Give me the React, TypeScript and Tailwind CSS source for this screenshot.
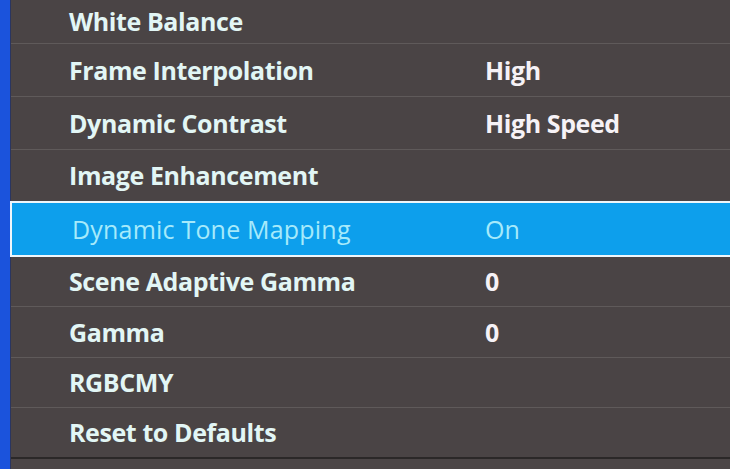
import React from "react";

type Row = { label: string; value?: string; h: string; sel?: boolean };

const rows: Row[] = [
  { label: "White Balance", h: "h-[44px]" },
  { label: "Frame Interpolation", value: "High", h: "h-[53px]" },
  { label: "Dynamic Contrast", value: "High Speed", h: "h-[53px]" },
  { label: "Image Enhancement", h: "h-[51px]" },
  { label: "Dynamic Tone Mapping", value: "On", h: "h-[56px]", sel: true },
  { label: "Scene Adaptive Gamma", value: "0", h: "h-[50px]" },
  { label: "Gamma", value: "0", h: "h-[51px]" },
  { label: "RGBCMY", h: "h-[50px]" },
  { label: "Reset to Defaults", h: "h-[51px]" },
];

export default function App() {
  return (
    <div
      className="w-[730px] h-[469px] overflow-hidden flex bg-[#4a4445]"
      style={{ fontFamily: '"Open Sans", "Noto Sans", sans-serif' }}
    >
      <div className="w-[11px] shrink-0 bg-[#1b53dc] border-r border-[#2a3560]" />
      <div className="flex-1 flex flex-col">
        {rows.map((r, i) => {
          if (r.sel) {
            return (
              <div
                key={i}
                className={`${r.h} shrink-0 flex items-center border-2 border-r-0 border-[#eef6fb] bg-[#0d9fec] -ml-[1px]`}
              >
                <div className="w-[473px] pl-[60px] text-[25px] leading-none text-[#a6eafb] font-normal tracking-[0.2px]">
                  {r.label}
                </div>
                <div className="text-[25px] leading-none text-[#a6eafb] font-normal">{r.value}</div>
              </div>
            );
          }
          const nextSel = rows[i + 1]?.sel;
          const last = i === rows.length - 1;
          return (
            <div
              key={i}
              className={`${r.h} shrink-0 flex items-center ${
                last ? "border-b-2 border-[#2b2828]" : nextSel ? "" : "border-b border-[#5f5a5a]"
              }`}
            >
              <div className="w-[474px] pl-[58px] text-[25px] leading-none font-bold tracking-[-0.4px] text-[#e2f6f5]">
                {r.label}
              </div>
              {r.value && (
                <div className="text-[25px] leading-none font-bold tracking-[-0.4px] text-[#f6f2f6]">{r.value}</div>
              )}
            </div>
          );
        })}
        <div className="flex-1 bg-[#4c4647]" />
      </div>
    </div>
  );
}
